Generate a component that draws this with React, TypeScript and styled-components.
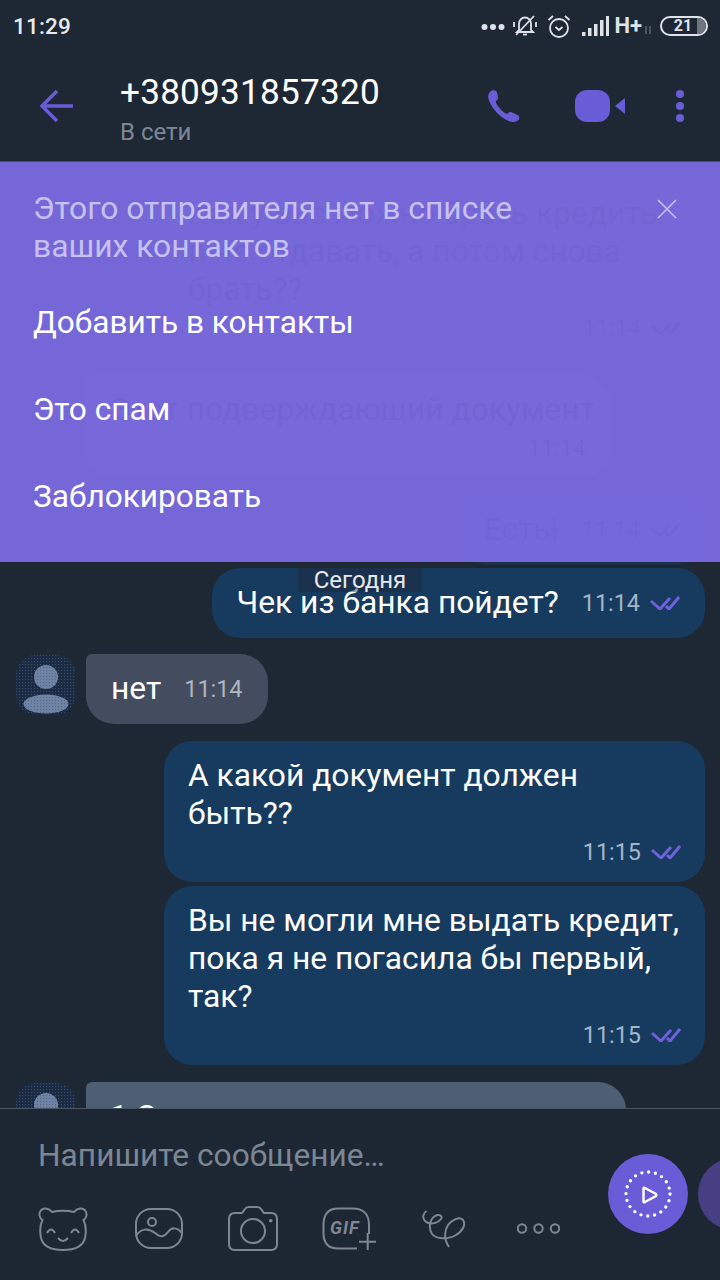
import React, { useId } from "react";
import styled, { createGlobalStyle } from "styled-components";

const Global = createGlobalStyle`
  html, body { margin: 0; padding: 0; background: #1e2734; }
  #root { width: 720px; height: 1280px; }
  * { box-sizing: border-box; }
`;

const Screen = styled.div`
  width: 720px; height: 1280px; overflow: hidden;
  display: flex; flex-direction: column;
  background: #1e2734;
  font-family: Roboto, "Noto Sans", sans-serif;
  color: #fff;
`;

const StatusBar = styled.div`
  height: 48px; flex: none;
  display: flex; align-items: center; justify-content: space-between;
  padding: 3px 12px 0 13px;
`;
const Clock = styled.span`
  font-size: 22.5px; font-weight: 500; color: #e6e9ed; letter-spacing: 0.2px;
`;
const StatusIcons = styled.div`
  display: flex; align-items: center; height: 30px;
`;
const StatusGlyph = styled.svg<{ $left: number }>`
  display: block; flex: none; margin-left: ${(p) => p.$left}px;
  fill: none; stroke: #dfe3e8;
`;
const Network = styled.span`
  font-size: 22px; font-weight: 700; color: #dfe3e8; margin-left: 5px; line-height: 20px;
`;
const Battery = styled.div`
  position: relative; overflow: hidden;
  width: 48px; height: 20px; margin-left: 8px;
  border: 2px solid #dfe3e8; border-radius: 10px;
  display: flex; align-items: center; justify-content: center;
  font-size: 16px; font-weight: 700; color: #dfe3e8; padding-right: 2px;
`;
const BatteryEmpty = styled.span`
  position: absolute; right: 0; top: 0; bottom: 0; width: 9px; background: #6d7580;
`;

const Header = styled.header`
  height: 113px; flex: none;
  display: flex; align-items: flex-start;
  padding-left: 40px;
  position: relative;
`;
const Back = styled.svg`
  display: block; flex: none; width: 34px; height: 34px; margin-top: 41px;
  fill: none; stroke: #6a5bd6; stroke-width: 3.6;
`;
const Peer = styled.div`
  width: 354px; margin-left: 46px; padding-top: 22px;
`;
const PeerName = styled.div`
  font-size: 35.2px; line-height: 44px; color: #fff; letter-spacing: 0.2px;
`;
const PeerState = styled.div`
  font-size: 24px; line-height: 28px; color: #7d8794; margin-top: 4px;
`;
const HeadIcon = styled.svg<{ $left: number; $top: number }>`
  display: block; flex: none; fill: #6a5bd6;
  margin-left: ${(p) => p.$left}px; margin-top: ${(p) => p.$top}px;
`;

const Chat = styled.main`
  position: relative; flex: 1; min-height: 0; overflow: hidden;
  padding-top: 18px;
`;
const Row = styled.div<{ $sent?: boolean; $gap: number }>`
  display: flex; align-items: flex-start; gap: 10px;
  justify-content: ${(p) => (p.$sent ? "flex-end" : "flex-start")};
  padding: 0 15px 0 16px;
  margin-top: ${(p) => p.$gap}px;
`;
const AvatarGap = styled.div`
  width: 60px; flex: none;
`;
const Bubble = styled.div<{ $sent?: boolean; $tone?: string; $width?: number; $ghost?: boolean; $inline?: boolean }>`
  flex: none;
  width: ${(p) => (p.$width ? `${p.$width}px` : "auto")};
  background: ${(p) => p.$tone ?? (p.$sent ? "#173a5f" : "#434d5f")};
  border-radius: ${(p) => (p.$sent ? "28px" : "6px 28px 28px 28px")};
  padding: ${(p) => (p.$inline ? "16px 25px" : "16px 24px 11px")};
  display: ${(p) => (p.$inline ? "flex" : "block")};
  align-items: center;
  gap: 23px;
  font-size: 31.75px; line-height: 38px;
  color: ${(p) => (p.$ghost ? "#05060f" : "#fff")};
  white-space: nowrap;
`;
const Meta = styled.div<{ $sent?: boolean; $ghost?: boolean }>`
  display: flex; align-items: center; justify-content: flex-end; gap: 10px;
  height: 38px;
  font-size: 23.4px;
  color: ${(p) => (p.$ghost ? "#05060f" : p.$sent ? "#a3b6c9" : "#b0b6be")};
`;
const Ticks = styled.svg<{ $ghost?: boolean }>`
  display: block; flex: none; width: 30px; height: 14px;
  fill: none; stroke: ${(p) => (p.$ghost ? "#05060f" : "#6f61dc")}; stroke-width: 3;
`;
const DateChip = styled.div`
  position: absolute; left: 298px; top: 407px; width: 124px; height: 24px;
  display: flex; align-items: center; justify-content: center;
  background: rgba(30, 39, 58, 0.45);
  font-size: 24px; color: #e6e9ec;
`;
const Notice = styled.section`
  position: absolute; left: 0; right: 0; top: 0; height: 401px;
  background: rgba(127, 111, 234, 0.9);
  border-top: 1px solid #4c4a7d;
  padding: 27px 0 0 33px;
`;
const NoticeHead = styled.div`
  display: flex; justify-content: space-between;
  padding-right: 43px;
  height: 91px;
`;
const NoticeText = styled.div`
  font-size: 31.8px; line-height: 38px; color: #c6c1f0;
`;
const Close = styled.svg`
  display: block; flex: none; width: 20px; height: 20px; margin-top: 10px;
  stroke: #c6c1f0; stroke-width: 1.6; fill: none;
`;
const NoticeAction = styled.div`
  height: 87px; font-size: 31.6px; line-height: 40px; color: #fff; padding-top: 23px;
`;

const Avatar = styled.svg`
  display: block; flex: none; width: 60px; height: 60px; margin-top: 1px;
`;

const Compose = styled.footer`
  height: 172px; flex: none; overflow: hidden;
  border-top: 1px solid #4a5564;
  background: #1d2633;
  display: flex; align-items: flex-start;
`;
const ComposeMain = styled.div`
  width: 608px; flex: none; padding: 28px 0 0 38px;
`;
const Placeholder = styled.div`
  font-size: 31.7px; line-height: 38px; color: #7b8794;
`;
const Tools = styled.div`
  display: grid; grid-template-columns: 97px 93px 94px 100px 95px auto;
  align-items: center;
  margin-top: 31px; height: 45px;
`;
const Tool = styled.svg`
  display: block; fill: none; stroke: #7d8794; stroke-width: 2;
`;
const GifLabel = styled.text`
  font-family: Roboto, sans-serif; font-size: 18px; font-weight: 700; font-style: italic;
  letter-spacing: 1px; fill: #7d8794; stroke: none;
`;
const Actions = styled.div`
  display: flex; align-items: center; gap: 10px; flex: none; margin-top: 45px;
`;
const Record = styled.div`
  width: 80px; height: 80px; flex: none; border-radius: 50%; background: #6a5bd6;
  display: flex; align-items: center; justify-content: center;
`;
const RecordIcon = styled.svg`
  display: block; width: 50px; height: 50px; fill: none; stroke: #fff;
`;
const NextAction = styled.div`
  width: 72px; height: 72px; flex: none; border-radius: 50%; background: #463f84;
`;

const PersonAvatar = () => {
  const id = useId();
  const skin = `${id}-skin`;
  return (
    <Avatar viewBox="0 0 60 60">
      <defs>
        <pattern id={id} width="3" height="3" patternUnits="userSpaceOnUse">
          <rect width="3" height="3" fill="#1b2a41" />
          <rect width="1.1" height="1.1" fill="#35506f" />
        </pattern>
        <pattern id={skin} width="3" height="3" patternUnits="userSpaceOnUse">
          <rect width="3" height="3" fill="#6f84a4" />
          <rect width="1.1" height="1.1" fill="#56688a" />
        </pattern>
      </defs>
      <rect x="0" y="0" width="60" height="60" rx="20" fill={`url(#${id})`} />
      <circle cx="30" cy="22" r="12" fill={`url(#${skin})`} />
      <ellipse cx="30" cy="49" rx="22.5" ry="9.5" fill={`url(#${skin})`} />
    </Avatar>
  );
};

const DoubleTick = ({ ghost }: { ghost?: boolean }) => (
  <Ticks viewBox="0 0 30 14" $ghost={ghost}>
    <path d="M1 5 L10 13 L20 2" />
    <path d="M16 10 L19 13 L29 1" />
  </Ticks>
);

const MetaLine = ({ time, sent, ghost }: { time: string; sent?: boolean; ghost?: boolean }) => (
  <Meta $sent={sent} $ghost={ghost}>
    <span>{time}</span>
    {sent && <DoubleTick ghost={ghost} />}
  </Meta>
);

export default function App() {
  return (
    <Screen>
      <Global />
      <StatusBar>
        <Clock>11:29</Clock>
        <StatusIcons>
          <StatusGlyph $left={0} width="24" height="8" viewBox="0 0 24 8" style={{ marginTop: 3 }}>
            <circle cx="3.5" cy="4" r="3" fill="#dfe3e8" stroke="none" />
            <circle cx="12" cy="4" r="3" fill="#dfe3e8" stroke="none" />
            <circle cx="20.5" cy="4" r="3" fill="#dfe3e8" stroke="none" />
          </StatusGlyph>
          <StatusGlyph $left={8} width="24" height="22" viewBox="0 0 24 22" strokeWidth="1.8">
            <path d="M6 15 V9 C6 5 9 2.5 12 2.5 C15 2.5 18 5 18 9 V15 L20 17 H4 Z" />
            <path d="M10 19.5 H14" />
            <path d="M1 7 V12 M23 7 V12" />
            <path d="M3 20 L21 1" stroke="#dfe3e8" />
          </StatusGlyph>
          <StatusGlyph $left={10} width="24" height="24" viewBox="0 0 24 24" strokeWidth="1.8">
            <circle cx="12" cy="14" r="9" />
            <path d="M8.5 13 L12 16 L15.5 13" />
            <path d="M1.5 6 L6 2 M22.5 6 L18 2" />
          </StatusGlyph>
          <StatusGlyph $left={11} width="27" height="20" viewBox="0 0 27 20">
            <rect x="0" y="16" width="3.5" height="4" fill="#dfe3e8" stroke="none" />
            <rect x="6" y="12" width="3.5" height="8" fill="#dfe3e8" stroke="none" />
            <rect x="12" y="8" width="3.5" height="12" fill="#dfe3e8" stroke="none" />
            <rect x="18" y="4" width="3.5" height="16" fill="#dfe3e8" stroke="none" />
            <rect x="24" y="0" width="3" height="20" fill="#dfe3e8" stroke="none" />
          </StatusGlyph>
          <Network>H+</Network>
          <StatusGlyph $left={2} width="8" height="8" viewBox="0 0 8 8" strokeWidth="1" style={{ marginTop: 8 }}>
            <path d="M2 0 V8 M6 0 V8" stroke="#79818b" />
          </StatusGlyph>
          <Battery>
            21
            <BatteryEmpty />
          </Battery>
        </StatusIcons>
      </StatusBar>

      <Header>
        <Back viewBox="0 0 34 34">
          <path d="M33 17 H3 M17 2 L2 17 L17 32" />
        </Back>
        <Peer>
          <PeerName>+380931857320</PeerName>
          <PeerState>В сети</PeerState>
        </Peer>
        <HeadIcon $left={14} $top={42} width="32" height="32" viewBox="0 0 32 32">
          <path d="M4 .5 C7 -.5 9 1 9.5 4 L10 8 C10 9.5 8.5 10.5 7.5 11.5 C9 16 14 21.5 19 24 C20 23 21.5 21.5 23 22 L29.5 25 C32 26.5 32 28.5 30 30.5 C28 32 25 32.5 22 31.5 C12 28 3.5 18.5 .5 9 C-.5 5.5 1 1.5 4 .5Z" />
        </HeadIcon>
        <HeadIcon $left={55} $top={42} width="50" height="32" viewBox="0 0 50 32">
          <rect x="0" y="0" width="35" height="32" rx="12" />
          <path d="M40 16 L50 8 V24 Z" />
        </HeadIcon>
        <HeadIcon $left={51} $top={42} width="8" height="32" viewBox="0 0 8 32">
          <circle cx="4" cy="4" r="4" />
          <circle cx="4" cy="16" r="4" />
          <circle cx="4" cy="28" r="4" />
        </HeadIcon>
      </Header>

      <Chat>
        <Row $sent $gap={0}>
          <Bubble $sent $ghost $width={541} $tone="#222c3a">
            Как у вас можно брать кредиты
            <br />и не отдавать, а потом снова
            <br />
            брать??
            <MetaLine time="11:14" sent ghost />
          </Bubble>
        </Row>
        <Row $gap={17}>
          <AvatarGap />
          <Bubble $ghost $width={524} $tone="#2c3543">
            Этот подверждающий документ
            <MetaLine time="11:14" ghost />
          </Bubble>
        </Row>
        <Row $sent $gap={17}>
          <Bubble $sent $ghost $inline $tone="#1c3049">
            <span>Есть!</span>
            <MetaLine time="11:14" sent ghost />
          </Bubble>
        </Row>
        <Row $sent $gap={3}>
          <Bubble $sent $inline>
            <span>Чек из банка пойдет?</span>
            <MetaLine time="11:14" sent />
          </Bubble>
        </Row>
        <Row $gap={16}>
          <PersonAvatar />
          <Bubble $inline>
            <span>нет</span>
            <MetaLine time="11:14" />
          </Bubble>
        </Row>
        <Row $sent $gap={17}>
          <Bubble $sent $width={541}>
            А какой документ должен
            <br />
            быть??
            <MetaLine time="11:15" sent />
          </Bubble>
        </Row>
        <Row $sent $gap={4}>
          <Bubble $sent $width={541}>
            Вы не могли мне выдать кредит,
            <br />
            пока я не погасила бы первый,
            <br />
            так?
            <MetaLine time="11:15" sent />
          </Bubble>
        </Row>
        <Row $gap={17}>
          <PersonAvatar />
          <Bubble $tone="#4d5f72" $width={540}>
            1 Сначала
          </Bubble>
        </Row>

        <DateChip>Сегодня</DateChip>

        <Notice>
          <NoticeHead>
            <NoticeText>
              Этого отправителя нет в списке
              <br />
              ваших контактов
            </NoticeText>
            <Close viewBox="0 0 20 20">
              <path d="M1 1 L19 19 M19 1 L1 19" />
            </Close>
          </NoticeHead>
          <NoticeAction>Добавить в контакты</NoticeAction>
          <NoticeAction>Это спам</NoticeAction>
          <NoticeAction>Заблокировать</NoticeAction>
        </Notice>
      </Chat>

      <Compose>
        <ComposeMain>
          <Placeholder>Напишите сообщение…</Placeholder>
          <Tools>
            <Tool width="50" height="45" viewBox="0 0 50 45">
              <path d="M14 6 C11 2 5 1 2.5 5 C0.5 8 1.5 12 4.5 14 C2 19 2 27 3 32 C5 40 12 44 25 44 C38 44 45 40 47 32 C48 27 48 19 45.5 14 C48.5 12 49.5 8 47.5 5 C45 1 39 2 36 6 C29 4.5 21 4.5 14 6 Z" />
              <path d="M9 27 Q13 20 17 27 M33 27 Q37 20 41 27 M20 32 Q25 38 30 32" />
            </Tool>
            <Tool width="48" height="41" viewBox="0 0 48 41">
              <rect x="1" y="1" width="46" height="39" rx="15" />
              <circle cx="17" cy="14" r="4" />
              <path d="M1 28 C6 20 13 20 20 25 C26 30 29 29 33 24 C37 19 42 19 47 25" />
            </Tool>
            <Tool width="50" height="45" viewBox="0 0 50 45">
              <path d="M7 7 H14 L17 3 Q18 1 21 1 H29 Q32 1 33 3 L36 7 H43 Q49 7 49 13 V38 Q49 44 43 44 H7 Q1 44 1 38 V13 Q1 7 7 7 Z" />
              <circle cx="25" cy="25" r="12" />
              <circle cx="42.7" cy="14.7" r="1.8" fill="#7d8794" stroke="none" />
            </Tool>
            <Tool width="54" height="43" viewBox="0 0 54 43">
              <path d="M47 27 V18 C47 6 41 1.5 30 1.5 H16 C6 1.5 1.5 7 1.5 18 V26 C1.5 36 6 41.5 16 41.5 H35" />
              <path d="M45.7 26 V43 M37 34.7 H54" />
              <GifLabel x="8" y="27">GIF</GifLabel>
            </Tool>
            <Tool width="44" height="38" viewBox="0 0 44 38">
              <path d="M4.5 1 C1 3 0 8 3 11 C7 15 15 14 19 9 C21 6 17 3.5 13 6 C8 9 6 18 10 24 C14 29 26 30 34 25 C41 21 44 14 41 10 C37 6 30 10 26 15 C22 21 22 30 27 37" />
            </Tool>
            <Tool width="43" height="11" viewBox="0 0 43 11">
              <circle cx="5" cy="5.5" r="4.2" />
              <circle cx="21.5" cy="5.5" r="4.2" />
              <circle cx="38" cy="5.5" r="4.2" />
            </Tool>
          </Tools>
        </ComposeMain>
        <Actions>
          <Record>
            <RecordIcon viewBox="0 0 50 50">
              <circle cx="25" cy="25" r="22" strokeWidth="3.4" strokeLinecap="round" strokeDasharray="0 6.91" />
              <path d="M20.5 19.5 V32.5 Q20.5 34 22 33 L33 27 Q34 26 33 25 L22 19 Q20.5 18 20.5 19.5Z" strokeWidth="2.4" />
            </RecordIcon>
          </Record>
          <NextAction />
        </Actions>
      </Compose>
    </Screen>
  );
}
